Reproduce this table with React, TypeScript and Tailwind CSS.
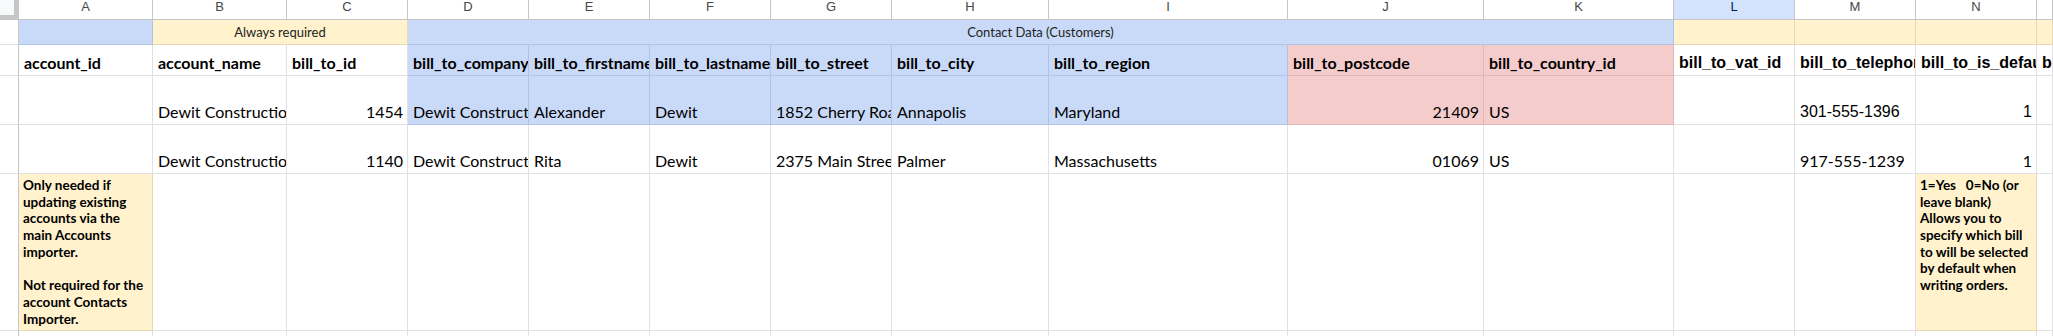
import React from "react";

type Bg = "w" | "b" | "y" | "p";

const bgCls: Record<Bg, string> = {
  w: "bg-white border-[#e1e1e1]",
  b: "bg-[#c9daf8] border-[#b1c3e4]",
  y: "bg-[#fff2cc] border-[#e6d9b3]",
  p: "bg-[#f4cccc] border-[#ddb8b8]",
};

const CAL = "font-['Lato',sans-serif]";
const ARI = "font-['Liberation_Sans',Arial,sans-serif]";

function Cell({
  bg = "w",
  children,
  right = false,
  font = "cal",
  bold = false,
  span = "",
}: {
  bg?: Bg;
  children?: React.ReactNode;
  right?: boolean;
  font?: "cal" | "ari";
  bold?: boolean;
  span?: string;
}) {
  return (
    <div
      className={`${bgCls[bg]} ${span} border-r border-b flex items-end overflow-hidden pl-[5px] pr-[4px] pb-[3px] ${
        right ? "justify-end" : "justify-start"
      }`}
    >
      {children !== undefined && children !== "" && (
        <span
          className={`whitespace-nowrap text-black ${
            font === "cal" ? `${CAL} text-[16px] leading-[19px]` : `${ARI} text-[16px] leading-[18px]`
          } ${bold ? "font-bold" : "font-normal"}`}
        >
          {children}
        </span>
      )}
    </div>
  );
}

function RowHead() {
  return <div className="bg-white border-r border-b border-r-[#c4c7c5] border-b-[#e1e1e1]" />;
}

function Note({ lines, bg = "y" }: { lines: string[]; bg?: Bg }) {
  return (
    <div className={`${bgCls[bg]} border-r border-b overflow-hidden pl-[4px] pr-[2px] pt-[3px]`}>
      {lines.map((l, i) => (
        <div
          key={i}
          className={`${CAL} font-bold text-[13.5px] leading-[16.7px] text-black whitespace-pre h-[16.7px]`}
        >
          {l}
        </div>
      ))}
    </div>
  );
}

const letters = ["A", "B", "C", "D", "E", "F", "G", "H", "I", "J", "K", "L", "M", "N", ""];

export default function App() {
  return (
    <div className="w-[2053px] h-[336px] overflow-hidden bg-white">
      <div className="grid grid-cols-[19px_134px_134px_121px_121px_121px_121px_121px_157px_239px_196px_190px_121px_121px_121px_1fr] grid-rows-[20px_25px_31px_49px_49px_157px_20px]">
        {/* column header row */}
        <div className="bg-[#c4c7c5] relative">
          <div className="absolute left-0 top-0 w-[14px] h-[15px] bg-[#f8f9fa]" />
        </div>
        {letters.map((l, i) => (
          <div
            key={i}
            className={`border-r border-b border-r-[#c4c7c5] border-b-[#c4c7c5] flex justify-center ${
              l === "L" ? "bg-[#d3e3fd]" : "bg-white"
            }`}
          >
            <span
              className={`${ARI} text-[13px] leading-[13px] ${
                l === "L" ? "text-[#041e49]" : "text-[#444746]"
              }`}
            >
              {l}
            </span>
          </div>
        ))}

        {/* row 1: groups */}
        <RowHead />
        <div className={`${bgCls.b} border-r border-b`} />
        <div className={`${bgCls.y} col-span-2 border-r border-b flex items-center justify-center`}>
          <span className={`${CAL} text-[13px] leading-[15px] text-[#222]`}>Always required</span>
        </div>
        <div className={`${bgCls.b} col-span-8 border-r border-b flex items-center justify-center`}>
          <span className={`${CAL} text-[13px] leading-[15px] text-[#222]`}>Contact Data (Customers)</span>
        </div>
        <div className={`${bgCls.y} border-r border-b`} />
        <div className={`${bgCls.y} border-r border-b`} />
        <div className={`${bgCls.y} border-r border-b`} />
        <div className={`${bgCls.y} border-r border-b`} />

        {/* row 2: headers */}
        <RowHead />
        <Cell bold>account_id</Cell>
        <Cell bold>account_name</Cell>
        <Cell bold>bill_to_id</Cell>
        <Cell bold bg="b">bill_to_company</Cell>
        <Cell bold bg="b">bill_to_firstname</Cell>
        <Cell bold bg="b">bill_to_lastname</Cell>
        <Cell bold bg="b">bill_to_street</Cell>
        <Cell bold bg="b">bill_to_city</Cell>
        <Cell bold bg="b">bill_to_region</Cell>
        <Cell bold bg="p">bill_to_postcode</Cell>
        <Cell bold bg="p">bill_to_country_id</Cell>
        <Cell bold font="ari">bill_to_vat_id</Cell>
        <Cell bold font="ari">bill_to_telephone</Cell>
        <Cell bold font="ari">bill_to_is_default</Cell>
        <Cell bold font="ari">bill_to_is_primary</Cell>

        {/* row 3 */}
        <RowHead />
        <Cell />
        <Cell>Dewit Construction</Cell>
        <Cell right>1454</Cell>
        <Cell bg="b">Dewit Construction</Cell>
        <Cell bg="b">Alexander</Cell>
        <Cell bg="b">Dewit</Cell>
        <Cell bg="b">1852 Cherry Road</Cell>
        <Cell bg="b">Annapolis</Cell>
        <Cell bg="b">Maryland</Cell>
        <Cell bg="p" right>21409</Cell>
        <Cell bg="p">US</Cell>
        <Cell />
        <Cell font="ari">301-555-1396</Cell>
        <Cell font="ari" right>1</Cell>
        <Cell />

        {/* row 4 */}
        <RowHead />
        <Cell />
        <Cell>Dewit Construction</Cell>
        <Cell right>1140</Cell>
        <Cell>Dewit Construction</Cell>
        <Cell>Rita</Cell>
        <Cell>Dewit</Cell>
        <Cell>2375 Main Street</Cell>
        <Cell>Palmer</Cell>
        <Cell>Massachusetts</Cell>
        <Cell right>01069</Cell>
        <Cell>US</Cell>
        <Cell />
        <Cell>917-555-1239</Cell>
        <Cell right>1</Cell>
        <Cell />

        {/* row 5: notes */}
        <RowHead />
        <Note
          lines={[
            "Only needed if",
            "updating existing",
            "accounts via the",
            "main Accounts",
            "importer.",
            "",
            "Not required for the",
            "account Contacts",
            "Importer.",
          ]}
        />
        <Cell />
        <Cell />
        <Cell />
        <Cell />
        <Cell />
        <Cell />
        <Cell />
        <Cell />
        <Cell />
        <Cell />
        <Cell />
        <Cell />
        <Note
          lines={[
            "1=Yes   0=No (or",
            "leave blank)",
            "Allows you to",
            "specify which bill",
            "to will be selected",
            "by default when",
            "writing orders.",
          ]}
        />
        <Cell />

        {/* row 6 */}
        <RowHead />
        {letters.map((_, i) => (
          <Cell key={i} />
        ))}
      </div>
    </div>
  );
}
